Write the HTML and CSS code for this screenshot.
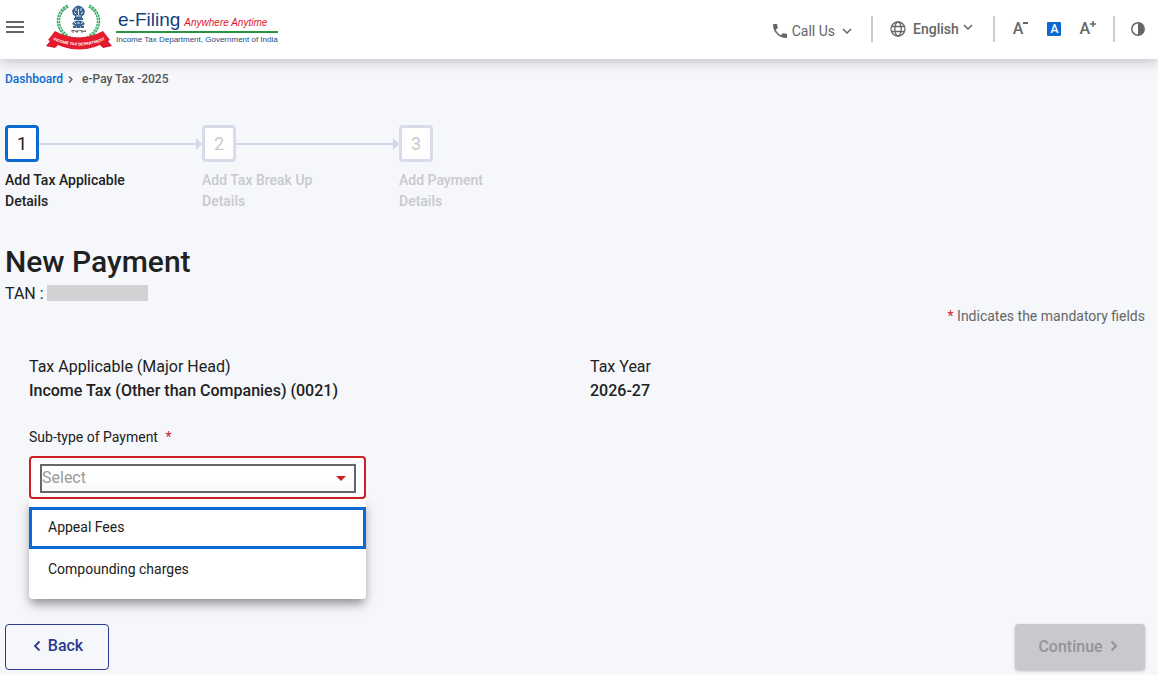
FILE: index.html
```html
<!DOCTYPE html>
<html lang="en">
<head>
<meta charset="utf-8">
<meta name="viewport" content="width=device-width, initial-scale=1">
<title>e-Pay Tax - New Payment</title>
<link rel="stylesheet" href="styles.css">
</head>
<body>
<header class="topbar">
  <button class="icon-btn menu-btn" type="button" aria-label="Menu">
    <svg width="18" height="12" viewBox="0 0 18 12"><path d="M0 1h18M0 6h18M0 11h18" stroke="#666" stroke-width="2"/></svg>
  </button>
  <a class="brand" href="#">
    <svg class="emblem" width="66" height="50" viewBox="0 0 66 50" aria-hidden="true">
      <g fill="none">
        <path d="M22 6C10 12 9 28 21 36M43 6C55 12 56 28 44 36" stroke="#2fa55c" stroke-width="3.400" stroke-dasharray="2.400 .7"/>
        <path d="M22 6C10 12 9 28 21 36M43 6C55 12 56 28 44 36" stroke="#b4dfc1" stroke-width="1"/>
        <path d="M20 36Q32 41 45 36" stroke="#2fa55c" stroke-width="2" stroke-dasharray="2 1"/>
      </g>
      <g fill="#3b6592">
        <path d="M29 7q3-3 7 0l2 2 1 2-1 4-2 1v2h-7v-2l-2-1-1-4 1-2z"/>
        <path d="M28 18h9v2h-9z"/>
        <ellipse cx="32.500" cy="23.500" rx="6" ry="3"/>
        <path d="M27 26h11v2H27z"/>
      </g>
      <path d="M30 8v3M35 8v3M28 12l2 2M37 12l-2 2M32.500 9v6M30 16h5M28 22l2 2M37 22l-2 2M31 23h3M30 27h1M34 27h1" stroke="#dce7f2" fill="none"/>
      <path d="M25 31q2-1 4 0t3 0 4 0 4 0M27 30v3M31 30v3M36 30v3M39 30v2" stroke="#44454b" stroke-width=".8" fill="none"/>
      <path d="M0 46l5-6 6 5-2 3zM66 46l-5-6-6 5 2 3z" fill="#bb1327"/>
      <path d="M9 31Q32 44 57 31L64 40Q33 59 2 40z" fill="#e51b2e"/>
      <path d="M2 39l4 1-5 6 9 1 3-3M64 39l-4 1 5 6-9 1-3-3" fill="#e51b2e"/>
      <path id="ribbon-line" d="M3 38Q33 53 63 38" fill="none"/>
      <text class="ribbon-text"><textPath href="#ribbon-line" startOffset="50%" text-anchor="middle">INCOME TAX DEPARTMENT</textPath></text>
    </svg>
    <span class="brand-text">
      <span class="brand-top"><span class="brand-name">e-Filing</span><span class="brand-tag">Anywhere Anytime</span></span>
      <span class="brand-sub">Income Tax Department, Government of India</span>
    </span>
  </a>
  <nav class="tools" aria-label="Utilities">
    <div class="tool-group call-group">
      <button class="tool" type="button">
        <svg width="14" height="14" viewBox="3 3 18 18"><path fill="#666" d="M6.600 10.800c1.400 2.800 3.800 5.100 6.600 6.600l2.200-2.200c.3-.3.700-.4 1-.2 1.100.4 2.300.6 3.600.6.600 0 1 .4 1 1V20c0 .6-.4 1-1 1C10.600 21 3 13.400 3 4c0-.6.500-1 1-1h3.500c.6 0 1 .4 1 1 0 1.300.2 2.500.6 3.600.1.400 0 .8-.3 1z"/></svg>
        <span>Call Us</span>
        <svg class="chev" width="10" height="6" viewBox="0 0 10 6"><path d="M1 1l4 4 4-4" fill="none" stroke="#666" stroke-width="1.500"/></svg>
      </button>
    </div>
    <div class="tool-group lang-group">
      <button class="tool lang" type="button">
        <svg width="16" height="16" viewBox="0 0 16 16"><g fill="none" stroke="#666" stroke-width="1.300"><circle cx="8" cy="8" r="7"/><ellipse cx="8" cy="8" rx="3.200" ry="7"/><path d="M1.500 5.500h13M1.500 10.500h13"/></g></svg>
        <span>English</span>
        <svg class="chev-up" width="10" height="6" viewBox="0 0 10 6"><path d="M1 1l4 4 4-4" fill="none" stroke="#666" stroke-width="1.500"/></svg>
      </button>
    </div>
    <div class="tool-group size-group">
      <button class="size-btn" type="button" aria-label="Decrease text size">A<svg width="6" height="10" viewBox="0 0 6 10"><path d="M0 3h5" stroke="#666" stroke-width="2"/></svg></button>
      <button class="size-btn size-default" type="button" aria-label="Default text size">A</button>
      <button class="size-btn" type="button" aria-label="Increase text size">A<svg width="6" height="10" viewBox="0 0 6 10"><path d="M0 4h6M3 1v6" stroke="#666" stroke-width="1.500"/></svg></button>
    </div>
    <div class="tool-group contrast-group">
      <button class="icon-btn" type="button" aria-label="Contrast">
        <svg width="14" height="14" viewBox="0 0 14 14"><circle cx="7" cy="7" r="6.200" fill="none" stroke="#666" stroke-width="1.500"/><path d="M7 1a6 6 0 0 1 0 12z" fill="#666"/></svg>
      </button>
    </div>
  </nav>
</header>
<main class="page">
  <nav class="crumbs" aria-label="Breadcrumb">
    <a href="#">Dashboard</a>
    <svg width="5" height="7" viewBox="0 0 5 7"><path d="M1 0.500l3 3-3 3" fill="none" stroke="#555" stroke-width="1.200"/></svg>
    <span>e-Pay Tax -2025</span>
  </nav>
  <ol class="steps">
    <li class="step active"><div class="step-track"><span class="step-num">1</span><span class="step-line"></span></div><span class="step-label">Add Tax Applicable Details</span></li>
    <li class="step"><div class="step-track"><span class="step-num">2</span><span class="step-line"></span></div><span class="step-label">Add Tax Break Up Details</span></li>
    <li class="step"><div class="step-track"><span class="step-num">3</span></div><span class="step-label">Add Payment Details</span></li>
  </ol>
  <h1 class="title">New Payment</h1>
  <p class="tan">TAN : <span class="masked"></span></p>
  <p class="mandatory"><span class="star">*</span> Indicates the mandatory fields</p>
  <form class="form">
    <dl class="facts">
      <div><dt>Tax Applicable (Major Head)</dt><dd>Income Tax (Other than Companies) (0021)</dd></div>
      <div><dt>Tax Year</dt><dd>2026-27</dd></div>
    </dl>
    <div class="field">
      <label class="field-label" for="subtype">Sub-type of Payment <span class="star">*</span></label>
      <div class="select-box">
        <select id="subtype" class="select" required>
          <option value="">Select</option>
          <option>Appeal Fees</option>
          <option>Compounding charges</option>
        </select>
        <svg class="caret" width="10" height="5" viewBox="0 0 10 5"><path d="M0 0h10L5 5z" fill="#cc1f26"/></svg>
      </div>
      <div class="menu" role="listbox" aria-label="Sub-type of Payment">
        <button class="option focused" type="button" role="option" aria-selected="false">Appeal Fees</button>
        <button class="option" type="button" role="option" aria-selected="false">Compounding charges</button>
      </div>
    </div>
    <div class="actions">
      <button class="btn back" type="button"><svg width="8" height="12" viewBox="0 0 8 12"><path d="M6.500 2.500L2 7l4.500 4.500" fill="none" stroke="#2b3990" stroke-width="1.800"/></svg>Back</button>
      <button class="btn continue" type="submit" disabled>Continue<svg width="8" height="12" viewBox="0 0 8 12"><path d="M1.500 1.500L6 6l-4.500 4.500" fill="none" stroke="#949497" stroke-width="2"/></svg></button>
    </div>
  </form>
</main>
</body>
</html>
```

FILE: styles.css
```css
* { box-sizing: border-box; }
body {
  margin: 0;
  background: #f5f7fb;
  color: #212121;
  font-family: Roboto, "Open Sans", sans-serif;
  font-size: 16px;
}
button, select { font: inherit; color: inherit; }
button { border: 0; padding: 0; background: none; cursor: pointer; }
svg { display: block; flex: none; }

.topbar {
  display: flex;
  align-items: flex-start;
  height: 59px;
  padding: 0 13px 0 6px;
  background: #fff;
  box-shadow: 0 2px 12px rgba(0, 0, 0, 0.24);
}
.menu-btn { margin-top: 21px; }
.brand { display: flex; gap: 4px; margin-left: 22px; text-decoration: none; }
.ribbon-text { font: bold 4px "Liberation Sans", sans-serif; fill: #fff; }
.brand-text { display: flex; flex-direction: column; padding-top: 9px; font-family: "Liberation Sans", sans-serif; }
.brand-top {
  display: flex;
  align-items: baseline;
  gap: 4px;
  height: 24px;
  padding-left: 2px;
  border-bottom: 2px solid #2a9443;
  line-height: 22px;
}
.brand-name { color: #14407c; font-size: 19px; }
.brand-tag { color: #e0142c; font-size: 10px; font-style: italic; }
.brand-sub { color: #1c4b82; font-size: 8px; line-height: 14px; white-space: nowrap; }

.tools { display: flex; margin: 16px 0 0 auto; color: #666; }
.tool-group { display: flex; align-items: center; height: 26px; }
.tool-group + .tool-group { border-left: 2px solid #ccc; }
.call-group { padding: 4px 19px 0 0; }
.lang-group { padding: 0 20px 0 17px; }
.size-group { gap: 18px; padding: 0 17px 0 18px; }
.contrast-group { padding-left: 16px; }
.tool { display: flex; align-items: center; gap: 5px; font-size: 14px; line-height: 20px; }
.chev { margin-left: 2px; }
.lang { gap: 7px; font-weight: 500; }
.chev-up { margin: 0 0 4px -3px; }
.size-btn { display: flex; align-items: center; font-size: 16px; font-weight: 500; line-height: 20px; }
.size-btn svg { margin-bottom: 8px; }
.size-default {
  justify-content: center;
  width: 14px;
  height: 14px;
  border-radius: 1px;
  background: #0b69d0;
  color: #fff;
  font-size: 12px;
}

.page { padding: 10px 13px 5px 5px; }
.crumbs { display: flex; align-items: center; font-size: 12px; font-weight: 500; line-height: 20px; color: #555; }
.crumbs a { color: #0b69d0; text-decoration: none; }
.crumbs svg { margin: 0 9px 0 5px; }

.steps { display: flex; margin: 36px 0 0; padding: 0; list-style: none; }
.step { width: 197px; color: #c9c9ce; }
.step-track { display: flex; align-items: center; }
.step-num {
  display: grid;
  place-items: center;
  width: 34px;
  height: 37px;
  border: 3px solid #d9daea;
  border-radius: 4px;
  background: #fff;
  font-size: 18px;
}
.step-line { flex: 1; display: flex; align-items: center; }
.step-line::before { content: ""; flex: 1; height: 2px; background: #d3d5ea; }
.step-line::after {
  content: "";
  border: 6px solid transparent;
  border-left-color: #d3d5ea;
  border-right-width: 0;
}
.step-label { display: block; max-width: 124px; margin-top: 8px; font-size: 14px; font-weight: 500; line-height: 21px; }
.active { color: #212121; }
.active .step-num { border-color: #0b69d0; }

.title { margin: 30px 0 0; font-size: 30px; font-weight: 500; line-height: 40px; }
.tan { display: flex; align-items: center; gap: 3px; margin: 0; line-height: 24px; }
.masked { width: 101px; height: 16px; margin-bottom: 3px; background: #d1d2d4; }
.mandatory { margin: 0; color: #666; font-size: 14px; line-height: 20px; text-align: right; }
.star { color: #d0212e; }

.form { display: flex; flex-direction: column; padding-top: 29px; }
.facts { display: grid; grid-template-columns: 1fr 1fr; gap: 30px; margin: 0 24px; line-height: 24px; }
.facts dd { margin: 0; font-weight: 500; }
.field { position: relative; width: 337px; max-width: 100%; margin: 24px 24px 0; }
.field-label { display: block; margin-bottom: 9px; font-size: 14px; line-height: 20px; }
.field-label .star { margin-left: 4px; }
.select-box {
  display: grid;
  align-items: center;
  padding: 6px 8px 4px 9px;
  border: 2px solid #cc1f26;
  border-radius: 4px;
  background: #fff;
}
.select {
  grid-area: 1 / 1;
  width: 100%;
  height: 29px;
  padding: 0 20px 2px 0;
  border: 2px solid #666;
  border-radius: 0;
  appearance: none;
  background: linear-gradient(#fff 50%, #f8f8f8);
  color: #999;
}
.caret { grid-area: 1 / 1; justify-self: end; margin-right: 10px; pointer-events: none; }
.menu {
  position: absolute;
  top: 100%;
  left: 0;
  right: 0;
  padding: 8px 0;
  border-radius: 0 0 4px 4px;
  background: #fff;
  box-shadow: 0 6px 8px -2px rgba(0, 0, 0, 0.3), 0 6px 14px rgba(0, 0, 0, 0.16);
}
.option {
  display: block;
  width: 100%;
  height: 42px;
  padding: 0 16px 2px;
  border: 3px solid transparent;
  font-size: 14px;
  text-align: left;
}
.focused { border-color: #0b69d0; }

.actions { display: flex; justify-content: space-between; margin-top: 125px; }
.btn {
  display: flex;
  align-items: center;
  justify-content: center;
  gap: 7px;
  height: 46px;
  border-radius: 4px;
  font-weight: 500;
}
.back { width: 104px; padding: 0 0 4px 2px; border: 1px solid #2b3990; color: #2b3990; }
.continue { width: 130px; padding: 0 4px 2px 0; background: #c9c9cd; color: #949497; box-shadow: 0 1px 3px rgba(0, 0, 0, 0.25); }
```
